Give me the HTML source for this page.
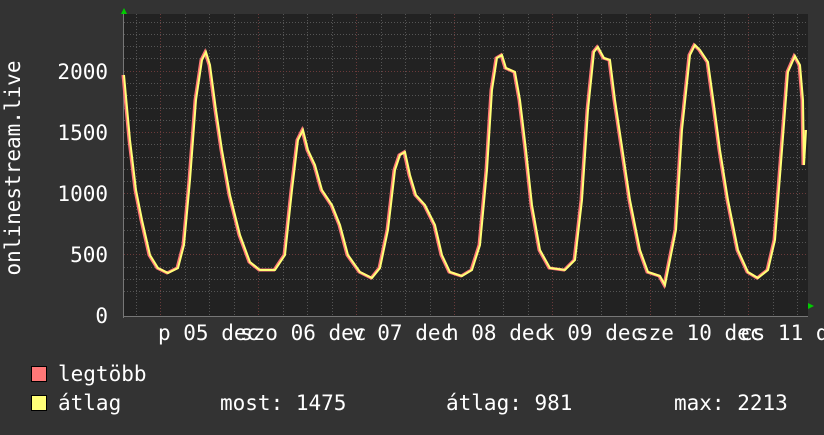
<!DOCTYPE html>
<html><head><style>
html,body{margin:0;padding:0;background:#333;}
svg text{font-family:"DejaVu Sans Mono","Liberation Mono",monospace;fill:#fff;}
</style></head><body>
<svg width="824" height="430" xmlns="http://www.w3.org/2000/svg">
<rect width="824" height="430" fill="#333"/>
<rect x="124" y="14" width="684" height="302" fill="#222"/>
<g stroke="#555" stroke-dasharray="1,2" stroke-width="1">
<path d="M124 291.5H808M124 279.5H808M124 267.5H808M124 242.5H808M124 230.5H808M124 218.5H808M124 206.5H808M124 181.5H808M124 169.5H808M124 157.5H808M124 144.5H808M124 120.5H808M124 108.5H808M124 95.5H808M124 83.5H808M124 58.5H808M124 46.5H808M124 34.5H808M124 22.5H808"/>
<path d="M136.5 14V316M185.5 14V316M209.5 14V316M234.5 14V316M283.5 14V316M307.5 14V316M332.5 14V316M381.5 14V316M405.5 14V316M430.5 14V316M479.5 14V316M503.5 14V316M528.5 14V316M577.5 14V316M601.5 14V316M626.5 14V316M675.5 14V316M699.5 14V316M724.5 14V316M773.5 14V316M797.5 14V316"/>
</g>
<g stroke="#6a3a3a" stroke-dasharray="1,2" stroke-width="1">
<path d="M124 254.5H808M124 193.5H808M124 132.5H808M124 71.5H808"/>
<path d="M160.5 14V316M258.5 14V316M356.5 14V316M454.5 14V316M552.5 14V316M650.5 14V316M748.5 14V316"/>
</g>
<path d="M124 316.5H808M123.5 14V318" stroke="#777" stroke-width="1"/>
<polygon points="121,14 127,14 124,8" fill="#0c0"/>
<polygon points="808,303 808,309 814,306" fill="#0c0"/>
<g fill="none" stroke-linejoin="miter">
<polyline stroke="#ff7777" stroke-width="3" transform="translate(-1,0)" points="124,75 130,140 136,190 142,220 150,255 158,268 168,273 178,268 184,245 190,180 196,100 202,60 206,52 210,65 216,110 222,150 230,195 240,235 250,262 260,270 275,270 285,255 292,190 298,140 303,130 308,150 315,165 322,190 332,205 340,225 348,255 360,272 372,278 380,268 388,230 395,170 400,155 405,152 410,175 416,195 425,205 435,225 442,255 450,272 462,276 472,270 480,245 487,170 492,90 497,58 502,55 506,68 515,72 520,100 526,150 532,205 540,250 550,268 565,270 575,260 582,200 588,110 594,52 598,47 604,58 610,60 615,100 621,140 630,200 640,250 648,272 660,276 665,285 668,270 676,230 682,130 690,55 695,45 700,50 708,62 714,105 720,150 728,200 738,250 748,272 758,278 768,270 775,240 782,150 788,72 795,56 800,65 803,100 804,165 806,130"/>
<polyline stroke="#ffff77" stroke-width="2" points="124,75 130,140 136,190 142,220 150,255 158,268 168,273 178,268 184,245 190,180 196,100 202,60 206,52 210,65 216,110 222,150 230,195 240,235 250,262 260,270 275,270 285,255 292,190 298,140 303,130 308,150 315,165 322,190 332,205 340,225 348,255 360,272 372,278 380,268 388,230 395,170 400,155 405,152 410,175 416,195 425,205 435,225 442,255 450,272 462,276 472,270 480,245 487,170 492,90 497,58 502,55 506,68 515,72 520,100 526,150 532,205 540,250 550,268 565,270 575,260 582,200 588,110 594,52 598,47 604,58 610,60 615,100 621,140 630,200 640,250 648,272 660,276 665,285 668,270 676,230 682,130 690,55 695,45 700,50 708,62 714,105 720,150 728,200 738,250 748,272 758,278 768,270 775,240 782,150 788,72 795,56 800,65 803,100 804,165 806,130"/>
</g>
<g font-size="21" text-anchor="end">
<text x="108" y="323">0</text>
<text x="108" y="262">500</text>
<text x="108" y="201">1000</text>
<text x="108" y="140">1500</text>
<text x="108" y="79">2000</text>
</g>
<text transform="translate(20,168) rotate(-90)" font-size="21" text-anchor="middle">onlinestream.live</text>
<g font-size="21">
<text x="158" y="340">p 05 dec</text>
<text x="240" y="340">szo 06 dec</text>
<text x="352" y="340">v 07 dec</text>
<text x="446" y="340">h 08 dec</text>
<text x="542" y="340">k 09 dec</text>
<text x="636" y="340">sze 10 dec</text>
<text x="740" y="340">cs 11 dec</text>
</g>
<rect x="31.5" y="366.5" width="15" height="15" fill="#ff7777" stroke="#000"/>
<rect x="31.5" y="395.5" width="15" height="15" fill="#ffff77" stroke="#000"/>
<g font-size="21">
<text x="58" y="381">legtöbb</text>
<text x="58" y="410">átlag</text>
<text x="220" y="410">most: 1475</text>
<text x="446" y="410">átlag: 981</text>
<text x="674" y="410">max: 2213</text>
</g>
</svg>
</body></html>
